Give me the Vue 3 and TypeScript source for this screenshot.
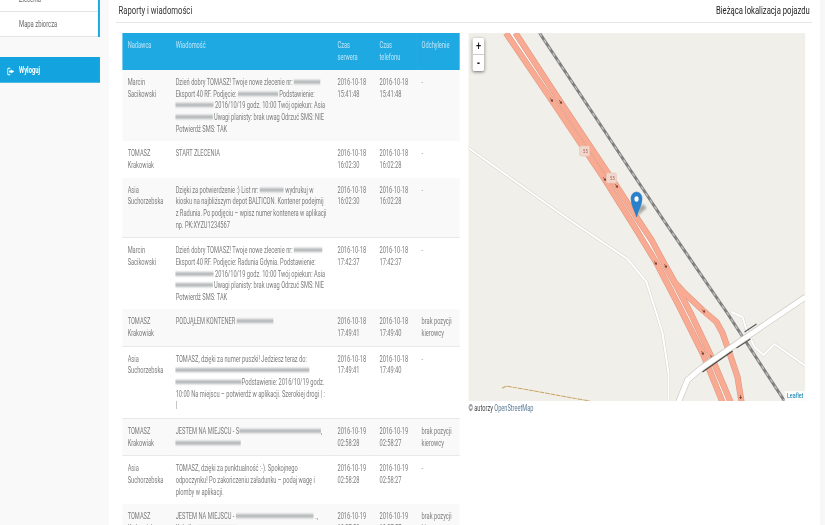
<script setup lang="ts">
type Seg = string | number
interface Row {
  from: string[]
  msg: Seg[][]
  server: string[]
  phone: string[]
  dev: string[]
  line?: boolean
}
const SX = 0.68
const blurStyle = (w: number) => ({ width: `${w / SX}px` })
const isBlur = (s: Seg) => typeof s === 'number'

const marcin = ['Marcin', 'Sacikowski']
const tomasz = ['TOMASZ', 'Krakowiak']
const asia = ['Asia', 'Suchorzebska']
const noPos = ['brak pozycji', 'kierowcy']

const rows: Row[] = [
  { from: marcin, msg: [['Dzień dobry TOMASZ! Twoje nowe zlecenie nr: ', 26], ['Eksport 40 RF. Podjęcie: ', 40, ' Podstawienie:'], [38, ' 2016/10/19 godz. 10:00 Twój opiekun: Asia'], [37, ' Uwagi planisty: brak uwag Odrzuć SMS: NIE'], ['Potwierdź SMS: TAK']], server: ['2016-10-18', '15:41:48'], phone: ['2016-10-18', '15:41:48'], dev: ['-'] },
  { from: tomasz, msg: [['START ZLECENIA']], server: ['2016-10-18', '16:02:30'], phone: ['2016-10-18', '16:02:28'], dev: ['-'] },
  { from: asia, msg: [['Dzięki za potwierdzenie :) List nr: ', 24, ' wydrukuj w'], ['kiosku na najbliższym depot BALTICON. Kontener podejmij'], ['z Radunia. Po podjęciu – wpisz numer kontenera w aplikacji'], ['np. PK:XYZU1234567']], server: ['2016-10-18', '16:02:30'], phone: ['2016-10-18', '16:02:28'], dev: ['-'], line: true },
  { from: marcin, msg: [['Dzień dobry TOMASZ! Twoje nowe zlecenie nr: ', 28], ['Eksport 40 RF. Podjęcie: Radunia Gdynia. Podstawienie:'], [38, ' 2016/10/19 godz. 10:00 Twój opiekun: Asia'], [37, ' Uwagi planisty: brak uwag Odrzuć SMS: NIE'], ['Potwierdź SMS: TAK']], server: ['2016-10-18', '17:42:37'], phone: ['2016-10-18', '17:42:37'], dev: ['-'] },
  { from: tomasz, msg: [['PODJĄŁEM KONTENER ', 37]], server: ['2016-10-18', '17:49:41'], phone: ['2016-10-18', '17:49:40'], dev: noPos, line: true },
  { from: asia, msg: [['TOMASZ, dzięki za numer puszki! Jedziesz teraz do:'], [134], [66, 'Podstawienie: 2016/10/19 godz.'], ['10:00 Na miejscu – potwierdź w aplikacji. Szerokiej drogi | :'], ['|']], server: ['2016-10-18', '17:49:41'], phone: ['2016-10-18', '17:49:40'], dev: ['-'], line: true },
  { from: tomasz, msg: [['JESTEM NA MIEJSCU - S', 82, ','], [65]], server: ['2016-10-19', '02:58:28'], phone: ['2016-10-19', '02:58:27'], dev: noPos, line: true },
  { from: asia, msg: [['TOMASZ, dzięki za punktualność :-). Spokojnego'], ['odpoczynku! Po zakończeniu załadunku – podaj wagę i'], ['plomby w aplikacji.']], server: ['2016-10-19', '02:58:28'], phone: ['2016-10-19', '02:58:27'], dev: ['-'] },
  { from: tomasz, msg: [['JESTEM NA MIEJSCU - ', 78, ' .,'], ['Kobyłka ', 40]], server: ['2016-10-19', '10:27:58'], phone: ['2016-10-19', '10:27:57'], dev: noPos },
]

const arrows: [number, number, number][] = [
  [552, 100, 57], [561, 102, 57], [605, 179, 57], [617, 186, 57], [656, 263, 60], [666, 266, 60],
  [704, 311, 42], [703, 353, 64], [712, 357, 64], [741, 397, 85],
]
const shields: [number, number][] = [[585, 151], [612, 178]]

const leftRoad = 'M506.5 33 552 100 605 179 632 222 643 240 657 263 680 307 703 353 723 402'
const midRoad = 'M516 33 561 102 617 186 640 222 652 240 666 266 678 288 692 315 712 357 731 402'
const ramp = 'M666 266 675 282 685 293 703 310 717 322 723 333 730 353 738 377 742 402'
const gap = 'M511 33 556.5 101 611 182.5 636 222 647.5 240 661.5 264.5 684 308 702.5 355 727 402'
const over = 'M806 297 747 337 702 368 688 380 679 402'
const rail = 'M540 33 664 220 727 312 785 401'
const minorA = 'M469 148 570 220 628 259 647 282 663 333 669 373V402'
const minorB = 'M732 312 743 317 747 330 755 347 764 355 775 344 806 366'
</script>

<template>
  <div class="page">
    <aside class="sidebar">
      <nav class="menu">
        <div class="menu-item">Zlecenia</div>
        <div class="menu-item">Mapa zbiorcza</div>
      </nav>
      <div class="logout">
        <svg class="logout-icon" viewBox="0 0 14 12" preserveAspectRatio="none">
          <path d="M6 1H2.5Q1 1 1 2.5v7Q1 11 2.5 11H6V9.6H3Q2.4 9.6 2.4 9V3q0-.6.6-.6h3z" fill="#fff" />
          <path d="M7 3.2 13 6 7 8.8V7.2H4V4.8h3z" fill="#fff" />
        </svg>
        <span>Wyloguj</span>
      </div>
    </aside>

    <main class="main">
      <header class="head">
        <h1>Raporty i wiadomości</h1>
        <h2>Bieżąca lokalizacja pojazdu</h2>
      </header>
      <div class="content">
        <table class="reports">
          <colgroup>
            <col class="c-from" /><col class="c-msg" /><col class="c-time" /><col class="c-time" /><col class="c-dev" />
          </colgroup>
          <thead>
            <tr>
              <th>Nadawca</th>
              <th>Wiadomość</th>
              <th>Czas<br />serwera</th>
              <th>Czas<br />telefonu</th>
              <th>Odchylenie</th>
            </tr>
          </thead>
          <tbody>
            <tr v-for="(row, i) in rows" :key="i" :class="{ odd: i % 2 === 0, ruled: row.line }">
              <td><div v-for="t in row.from" :key="t">{{ t }}</div></td>
              <td>
                <div v-for="(ln, j) in row.msg" :key="j" class="msg-line">
                  <template v-for="(s, k) in ln" :key="k">
                    <span v-if="isBlur(s)" class="redacted" :style="blurStyle(s as number)"></span>
                    <template v-else>{{ s }}</template>
                  </template>
                </div>
              </td>
              <td><div v-for="t in row.server" :key="t">{{ t }}</div></td>
              <td><div v-for="t in row.phone" :key="t">{{ t }}</div></td>
              <td><div v-for="t in row.dev" :key="t">{{ t }}</div></td>
            </tr>
          </tbody>
        </table>

        <section class="map-col">
          <div class="map">
            <svg class="map-svg" viewBox="469 33 337 368" preserveAspectRatio="none">
              <defs>
                <filter id="sh" x="-50%" y="-50%" width="200%" height="200%"><feGaussianBlur stdDeviation="1.3" /></filter>
              </defs>
              <g fill="none" stroke-linejoin="round" stroke-linecap="round">
                <path class="minor-c" :d="minorA" />
                <path class="minor" :d="minorA" />
                <path class="minor-c" :d="minorB" />
                <path class="minor" :d="minorB" />
                <path d="M503 388 507 386 590 401" stroke="#c9a564" stroke-width="1" stroke-dasharray="4 1.5" />
                <path :d="rail" stroke="#7f7f7f" stroke-width="3" stroke-linecap="butt" />
                <path :d="rail" stroke="#bdbdb9" stroke-width="1.4" stroke-dasharray="4 4" stroke-linecap="butt" />
              </g>
              <g fill="none" stroke-linejoin="round">
                <path :d="gap" stroke="#fff" stroke-width="4" />
                <path class="trunk-c" :d="leftRoad" />
                <path class="trunk-c" :d="midRoad" />
                <path class="trunk-c" :d="ramp" />
                <path class="trunk" :d="leftRoad" />
                <path class="trunk" :d="midRoad" />
                <path class="trunk" :d="ramp" />
              </g>
              <g v-for="(a, i) in arrows" :key="i" :transform="`translate(${a[0]} ${a[1]}) rotate(${a[2]})`">
                <path d="M-2.2 0H1.2M.3-1 1.8 0 .3 1z" stroke="#6e3a2c" stroke-width=".6" fill="#5a2a20" />
              </g>
              <g fill="none" stroke-linejoin="round">
                <path :d="over" stroke="#cfccc6" stroke-width="6.4" />
                <path d="M703 372 733 351" stroke="#444" stroke-width="1" />
                <path d="M745 332 757 324" stroke="#555" stroke-width="1" />
                <path d="M737 348 751 339" stroke="#555" stroke-width="1" />
                <path :d="over" stroke="#fff" stroke-width="5" />
              </g>
              <g v-for="(s, i) in shields" :key="i">
                <rect :x="s[0] - 5" :y="s[1] - 5" width="10" height="10" rx="1.5" fill="#f0d6cb" stroke="#e8c6b8" stroke-width=".6" />
              </g>
              <path d="M638 216 647 208 644 204 640 207z" fill="#000" opacity=".3" filter="url(#sh)" />
              <path d="M637 217C635 210 631.5 205 631.5 198.6 631.5 194.8 634 192 637 192S642.5 194.8 642.5 198.6C642.5 205 639 210 637 217z" fill="#2a81cb" stroke="#2472b4" stroke-width=".5" />
              <ellipse cx="637" cy="199" rx="2.1" ry="2.8" fill="#fff" />
            </svg>
            <span v-for="(s, i) in shields" :key="i" class="shield" :class="`s${i}`">55</span>
            <div class="zoom-ctl">
              <div class="zoom-btn">+</div>
              <div class="zoom-btn">-</div>
            </div>
            <div class="leaflet">Leaflet</div>
          </div>
          <div class="osm">© autorzy <span>OpenStreetMap</span></div>
        </section>
      </div>
    </main>
    <div class="strip"></div>
  </div>
</template>

<style scoped>
.page {
  display: flex;
  width: 1213.3px;
  height: 525px;
  overflow: hidden;
  background: #f9f9f9;
  transform: scaleX(0.68);
  transform-origin: 0 0;
  font-family: Roboto, "Liberation Sans", sans-serif;
  font-size: 8.4px;
  line-height: 11.7px;
  color: #7c7c7c;
}
.sidebar {
  flex: 0 0 160.3px;
  overflow: hidden;
}
.menu {
  width: 147px;
  margin-top: -13px;
  box-sizing: border-box;
  background: #fff;
  border-right: 3px solid #1fa9e2;
}
.menu-item {
  height: 24px;
  padding-left: 28px;
  line-height: 25px;
  border-bottom: 1px solid #e2e5e8;
  font-size: 8.6px;
  color: #666;
}
.logout {
  display: flex;
  align-items: center;
  gap: 6px;
  width: 147px;
  height: 26px;
  margin-top: 20px;
  padding: 3px 0 0 10px;
  box-sizing: border-box;
  background: #13a3df;
  color: #fff;
  font-weight: 700;
  font-size: 8.6px;
  border-bottom: 1px solid #4cb9e6;
}
.logout-icon {
  width: 12px;
  height: 9px;
}
.main {
  flex: 0 0 1045.6px;
  background: #fff;
  padding: 0 12px 0 10px;
  box-sizing: border-box;
  overflow: hidden;
}
.head {
  display: flex;
  justify-content: space-between;
  align-items: center;
  height: 23px;
  padding: 0 3px 0 4px;
  box-sizing: border-box;
  border-bottom: 1px solid #e4e7ea;
  margin-bottom: 10px;
}
.head h1,
.head h2 {
  margin: 0;
  font-weight: 400;
  font-size: 11.3px;
  line-height: 18px;
  color: #333;
}
.head h2 {
  color: #222;
}
.content {
  display: flex;
  gap: 13px;
  align-items: flex-start;
  padding-left: 10px;
}
.reports {
  flex: 0 0 495.6px;
  width: 495.6px;
  table-layout: fixed;
  border-collapse: separate;
  border-spacing: 0;
}
.c-from { width: 70.6px; }
.c-msg { width: 238px; }
.c-time { width: 61.8px; }
.c-dev { width: 63.4px; }
th {
  height: 37px;
  padding: 7px 7.4px 6px;
  box-sizing: border-box;
  background: #1fa9e2;
  box-shadow: 1px 0 0 #1fa9e2;
  color: #bde6f8;
  font-weight: 400;
  text-align: left;
  vertical-align: top;
  white-space: nowrap;
}
th:last-child { box-shadow: none; }
td {
  padding: 7px 7.4px 5.8px;
  vertical-align: top;
  white-space: nowrap;
  overflow: hidden;
}
tr.odd td {
  background: #f9f9f9;
  box-shadow: 1px 0 0 #f9f9f9;
}
tr.odd td:last-child { box-shadow: none; }
tr.ruled td { border-bottom: 1px solid #e8e8e8; }
.msg-line { min-height: 11.7px; }
.redacted {
  display: inline-block;
  height: 4px;
  vertical-align: 1px;
  background: #b6b9bb;
  filter: blur(1.1px);
}
.map-col { flex: 0 0 495.6px; }
.map {
  position: relative;
  height: 368px;
  background: #f1efe9;
  overflow: hidden;
}
.map-svg {
  display: block;
  width: 100%;
  height: 100%;
}
.minor-c { stroke: #d8d5cf; stroke-width: 3; }
.minor { stroke: #fff; stroke-width: 2; }
.trunk-c { stroke: #e09a85; stroke-width: 6.2; }
.trunk { stroke: #f8ab92; stroke-width: 5; }
.shield {
  position: absolute;
  width: 14px;
  text-align: center;
  font-size: 6px;
  line-height: 10px;
  color: #a4645a;
}
.s0 { left: 165px; top: 113px; }
.s1 { left: 204.7px; top: 140px; }
.zoom-ctl {
  position: absolute;
  left: 6px;
  top: 5px;
  width: 17.6px;
  background: #fff;
  border-radius: 2px;
  box-shadow: 0 1px 4px rgba(0, 0, 0, 0.55);
}
.zoom-btn {
  height: 16px;
  text-align: center;
  font: 700 13px/16px "Liberation Sans", sans-serif;
  color: #111;
}
.zoom-btn + .zoom-btn { border-top: 1px solid #ccc; }
.leaflet {
  position: absolute;
  right: 0;
  bottom: 0;
  padding: 0 3px;
  background: rgba(255, 255, 255, 0.8);
  font-size: 8px;
  line-height: 10px;
  color: #0078a8;
}
.osm {
  margin-top: 1px;
  font-size: 8.3px;
  line-height: 12px;
  color: #444;
}
.osm span { color: #5b7b96; }
.strip {
  flex: 1;
  background: #f7f7f7;
}
</style>

<style>
html, body { overflow: hidden; background: #fff; }
</style>
